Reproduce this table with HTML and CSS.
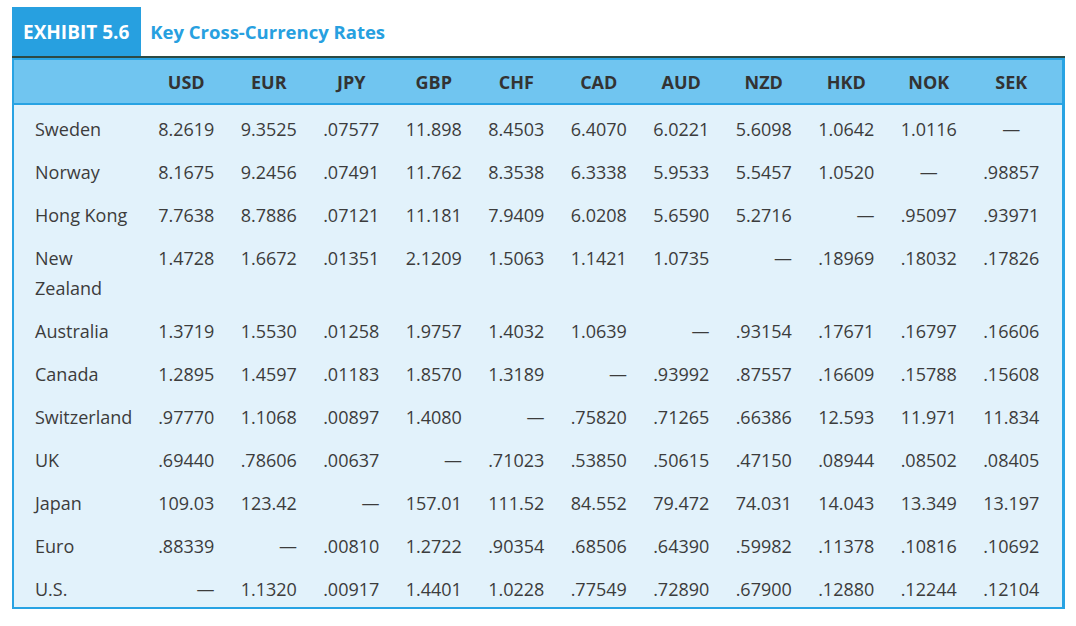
FILE: index.html
```html
<!DOCTYPE html>
<html lang="en">
<head>
<meta charset="utf-8">
<title>Exhibit 5.6 Key Cross-Currency Rates</title>
<link rel="stylesheet" href="styles.css">
</head>
<body>
<div class="exhibit">
  <div class="title-bar">
    <div class="tab">EXHIBIT 5.6</div>
    <div class="title">Key Cross-Currency Rates</div>
  </div>
  <div class="rule"></div>
  <div class="box">
    <div class="row head">
      <div class="label"></div>
      <div>USD</div><div>EUR</div><div>JPY</div><div>GBP</div><div>CHF</div><div>CAD</div><div>AUD</div><div>NZD</div><div>HKD</div><div>NOK</div><div>SEK</div>
    </div>
    <div class="body">
      <div class="row">
        <div class="label">Sweden</div>
        <div>8.2619</div><div>9.3525</div><div>.07577</div><div>11.898</div><div>8.4503</div><div>6.4070</div><div>6.0221</div><div>5.6098</div><div>1.0642</div><div>1.0116</div><div class="dash">—</div>
      </div>
      <div class="row">
        <div class="label">Norway</div>
        <div>8.1675</div><div>9.2456</div><div>.07491</div><div>11.762</div><div>8.3538</div><div>6.3338</div><div>5.9533</div><div>5.5457</div><div>1.0520</div><div class="dash">—</div><div>.98857</div>
      </div>
      <div class="row">
        <div class="label">Hong Kong</div>
        <div>7.7638</div><div>8.7886</div><div>.07121</div><div>11.181</div><div>7.9409</div><div>6.0208</div><div>5.6590</div><div>5.2716</div><div class="dash right">—</div><div>.95097</div><div>.93971</div>
      </div>
      <div class="row">
        <div class="label">New<br>Zealand</div>
        <div>1.4728</div><div>1.6672</div><div>.01351</div><div>2.1209</div><div>1.5063</div><div>1.1421</div><div>1.0735</div><div class="dash right">—</div><div>.18969</div><div>.18032</div><div>.17826</div>
      </div>
      <div class="row">
        <div class="label">Australia</div>
        <div>1.3719</div><div>1.5530</div><div>.01258</div><div>1.9757</div><div>1.4032</div><div>1.0639</div><div class="dash right">—</div><div>.93154</div><div>.17671</div><div>.16797</div><div>.16606</div>
      </div>
      <div class="row">
        <div class="label">Canada</div>
        <div>1.2895</div><div>1.4597</div><div>.01183</div><div>1.8570</div><div>1.3189</div><div class="dash right">—</div><div>.93992</div><div>.87557</div><div>.16609</div><div>.15788</div><div>.15608</div>
      </div>
      <div class="row">
        <div class="label">Switzerland</div>
        <div>.97770</div><div>1.1068</div><div>.00897</div><div>1.4080</div><div class="dash right">—</div><div>.75820</div><div>.71265</div><div>.66386</div><div>12.593</div><div>11.971</div><div>11.834</div>
      </div>
      <div class="row">
        <div class="label">UK</div>
        <div>.69440</div><div>.78606</div><div>.00637</div><div class="dash right">—</div><div>.71023</div><div>.53850</div><div>.50615</div><div>.47150</div><div>.08944</div><div>.08502</div><div>.08405</div>
      </div>
      <div class="row">
        <div class="label">Japan</div>
        <div>109.03</div><div>123.42</div><div class="dash right">—</div><div>157.01</div><div>111.52</div><div>84.552</div><div>79.472</div><div>74.031</div><div>14.043</div><div>13.349</div><div>13.197</div>
      </div>
      <div class="row">
        <div class="label">Euro</div>
        <div>.88339</div><div class="dash right">—</div><div>.00810</div><div>1.2722</div><div>.90354</div><div>.68506</div><div>.64390</div><div>.59982</div><div>.11378</div><div>.10816</div><div>.10692</div>
      </div>
      <div class="row">
        <div class="label">U.S.</div>
        <div class="dash right">—</div><div>1.1320</div><div>.00917</div><div>1.4401</div><div>1.0228</div><div>.77549</div><div>.72890</div><div>.67900</div><div>.12880</div><div>.12244</div><div>.12104</div>
      </div>
    </div>
  </div>
</div>
</body>
</html>
```
FILE: styles.css
```css
html, body {
  margin: 0;
  padding: 0;
  background: #ffffff;
}

body {
  font-family: "Open Sans", "Liberation Sans", sans-serif;
  color: #3c3c3c;
}

.exhibit {
  width: 1053px;
  margin: 7px 0 0 12px;
}

.title-bar {
  display: flex;
  align-items: stretch;
  height: 49px;
}

.tab {
  display: flex;
  align-items: center;
  padding: 0 12px 0 11px;
  background: #27a0e0;
  color: #ffffff;
  font-weight: 700;
  font-size: 19px;
}

.title {
  display: flex;
  align-items: center;
  margin-left: 9px;
  color: #27a0e0;
  font-weight: 700;
  font-size: 18.5px;
}

.rule {
  height: 2px;
  background: #2d4a44;
}

.box {
  width: 1053px;
  border: 2px solid #28a3e3;
  border-right-width: 3px;
  background: #e2f2fb;
  box-sizing: border-box;
}

.row {
  display: grid;
  grid-template-columns: 131px repeat(11, 82.5px);
  font-size: 18px;
  line-height: 30px;
  padding: 6.5px 0;
  text-align: center;
}

.row .label {
  text-align: left;
  padding-left: 21px;
}

.head {
  height: 45px;
  padding: 0;
  box-sizing: border-box;
  align-items: center;
  background: #70c5f0;
  border-bottom: 2px solid #28a3e3;
  font-weight: 700;
  color: #333333;
}

.body {
  padding-top: 2px;
}

.body .row:last-child {
  padding-bottom: 3.5px;
}

.dash.right {
  text-align: right;
  padding-right: 13px;
}
```
